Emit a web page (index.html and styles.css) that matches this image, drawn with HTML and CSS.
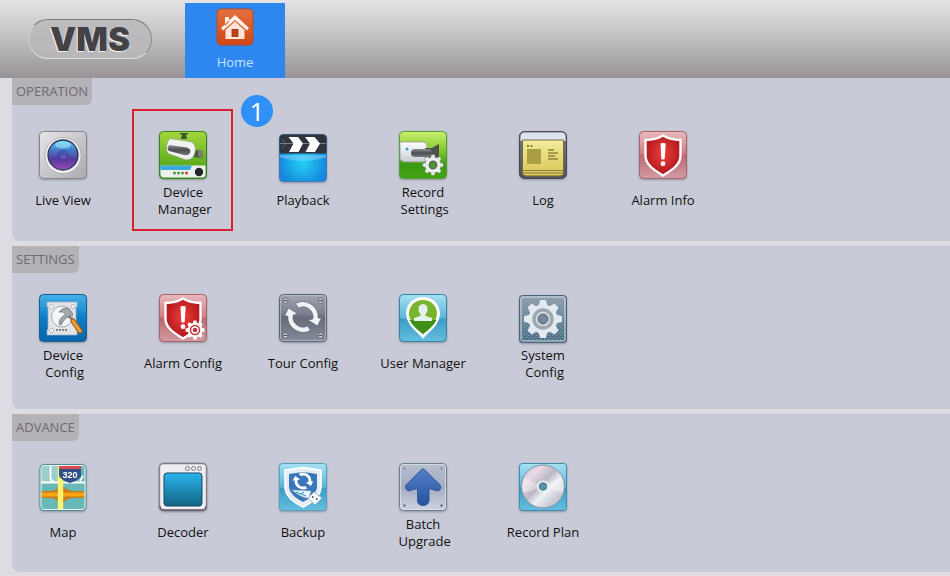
FILE: index.html
```html
<!DOCTYPE html>
<html lang="en">
<head>
  <meta charset="utf-8">
  <title>VMS</title>
  <link rel="stylesheet" href="styles.css">
</head>
<body>
  <!-- shared gradients and shapes -->
  <svg class="defs" aria-hidden="true">
    <defs>
      <linearGradient id="silver" x2="1" y2="1"><stop offset="0" stop-color="#e6e6ea"/><stop offset="1" stop-color="#aaa9ae"/></linearGradient>
      <linearGradient id="white" x2="0" y2="1"><stop offset="0" stop-color="#fff"/><stop offset="1" stop-color="#c9ccd4"/></linearGradient>
      <linearGradient id="lens" x2="0" y2="1"><stop offset="0" stop-color="#59cdf5"/><stop offset=".35" stop-color="#4678c4"/><stop offset=".65" stop-color="#56399d"/><stop offset="1" stop-color="#9a4bb5"/></linearGradient>
      <linearGradient id="green" x2="0" y2="1"><stop offset="0" stop-color="#a4d63a"/><stop offset="1" stop-color="#3f9c14"/></linearGradient>
      <linearGradient id="lime" x2="0" y2="1"><stop offset="0" stop-color="#c9f070"/><stop offset=".45" stop-color="#7cc425"/><stop offset=".7" stop-color="#3b9a10"/><stop offset="1" stop-color="#41a514"/></linearGradient>
      <linearGradient id="dark" x2="0" y2="1"><stop offset="0" stop-color="#8d8f92"/><stop offset=".5" stop-color="#4a4c50"/><stop offset="1" stop-color="#77797d"/></linearGradient>
      <radialGradient id="water" cy=".6"><stop offset="0" stop-color="#22d0f4"/><stop offset="1" stop-color="#1689de"/></radialGradient>
      <linearGradient id="frame" x2="0" y2="1"><stop offset="0" stop-color="#77757f"/><stop offset="1" stop-color="#55505a"/></linearGradient>
      <linearGradient id="paper" x2="0" y2="1"><stop offset="0" stop-color="#f4eb9d"/><stop offset="1" stop-color="#d8c655"/></linearGradient>
      <linearGradient id="pink" x2="0" y2="1"><stop offset="0" stop-color="#e9b9bd"/><stop offset=".48" stop-color="#cf7d84"/><stop offset=".5" stop-color="#b9686f"/><stop offset="1" stop-color="#d39ba2"/></linearGradient>
      <radialGradient id="red" cy=".45"><stop offset="0" stop-color="#ee403c"/><stop offset="1" stop-color="#b5191e"/></radialGradient>
      <linearGradient id="blue" x2="0" y2="1"><stop offset="0" stop-color="#45b2ea"/><stop offset=".5" stop-color="#0e7cc6"/><stop offset="1" stop-color="#0865a9"/></linearGradient>
      <linearGradient id="slate" x2="0" y2="1"><stop offset="0" stop-color="#a3a8b3"/><stop offset=".4" stop-color="#7a808d"/><stop offset=".5" stop-color="#666c7a"/><stop offset="1" stop-color="#858b98"/></linearGradient>
      <linearGradient id="sky" x2="0" y2="1"><stop offset="0" stop-color="#a6e2f3"/><stop offset=".5" stop-color="#5bb5d6"/><stop offset=".53" stop-color="#3b9dc5"/><stop offset="1" stop-color="#65bfdf"/></linearGradient>
      <linearGradient id="steel" x2="0" y2="1"><stop offset="0" stop-color="#91a2b1"/><stop offset=".5" stop-color="#6a8498"/><stop offset="1" stop-color="#4b7088"/></linearGradient>
      <linearGradient id="screen" x2="0" y2="1"><stop offset="0" stop-color="#2bb5ec"/><stop offset="1" stop-color="#126384"/></linearGradient>
      <linearGradient id="plate" x2="0" y2="1"><stop offset="0" stop-color="#b7bfd0"/><stop offset=".5" stop-color="#a2acc2"/><stop offset="1" stop-color="#cdd3e0"/></linearGradient>
      <linearGradient id="arrow" x2="0" y2="1"><stop offset="0" stop-color="#527fc6"/><stop offset="1" stop-color="#26539f"/></linearGradient>
      <linearGradient id="disc" x2="1" y2="1"><stop offset="0" stop-color="#c6c6d0"/><stop offset=".25" stop-color="#ead9e6"/><stop offset=".45" stop-color="#b8b9c4"/><stop offset=".6" stop-color="#eff0f4"/><stop offset=".8" stop-color="#c8c7d2"/><stop offset="1" stop-color="#e4e6eb"/></linearGradient>
      <linearGradient id="orange" x2="0" y2="1"><stop offset="0" stop-color="#e4703e"/><stop offset="1" stop-color="#cf4715"/></linearGradient>
      <pattern id="dots" width="4" height="4" patternUnits="userSpaceOnUse"><rect width="1" height="1" x="1" y="1" fill="#93a9b9"/><rect width="1" height="1" x="3" y="3" fill="#93a9b9"/></pattern>
      <path id="tooth" d="M-4.500-13 L-2.800-19 H2.800 L4.500-13z"/>
      <g id="gear">
        <circle r="14.500"/>
        <use href="#tooth"/><use href="#tooth" transform="rotate(45)"/><use href="#tooth" transform="rotate(90)"/><use href="#tooth" transform="rotate(135)"/>
        <use href="#tooth" transform="rotate(180)"/><use href="#tooth" transform="rotate(225)"/><use href="#tooth" transform="rotate(270)"/><use href="#tooth" transform="rotate(315)"/>
      </g>
      <g id="shield">
        <path d="M24 4.500C30 8 35 9 41.500 9V25C41.500 33 34 38.500 24 44.500C14 38.500 6.500 33 6.500 25V9C13 9 18 8 24 4.500z" fill="url(#red)" stroke="#fff" stroke-width="2.400"/>
        <path d="M21.500 12.500Q24 11.300 26.700 12.500L25.700 28Q24 29 22.300 28z" fill="#fff"/><circle cx="24" cy="32.700" r="2.400" fill="#fff"/>
      </g>
      <g id="screw"><circle r="2.700" fill="#d5d8df" stroke="#525866" stroke-width=".8"/><path d="M-2 0H2" stroke="#454b58" stroke-width="1.200"/></g>
      <g id="cycle">
        <path d="M-7.500-13.500A15.500 15.500 0 0 1 15.200 1H18.500L14.500 9L5 3L9.800 2A10 10 0 0 0-4.500-9z"/>
        <path d="M-7.500-13.500A15.500 15.500 0 0 1 15.200 1H18.500L14.500 9L5 3L9.800 2A10 10 0 0 0-4.500-9z" transform="rotate(180)"/>
      </g>
    </defs>
  </svg>

  <header class="header">
    <div class="logo">VMS</div>
    <button class="tab" type="button">
      <svg class="tab-icon" viewBox="0 0 38 38" aria-hidden="true">
        <rect x="1" y="1" width="36" height="36" rx="4" fill="url(#orange)" stroke="#b94a22"/>
        <path d="M9 18V9H13V14M19 7L5 20L7 22.500L19 12L31 22.500L33 20z" fill="#fff3ec"/>
        <path d="M9.500 22L19 13.500L28.500 22V31H9.500z" fill="#ffe6d9"/>
        <rect x="16" y="21.500" width="6" height="7" fill="#bf4519" stroke="#8a3513" stroke-width=".8"/>
      </svg>
      Home
    </button>
  </header>

  <main class="panels">
    <section class="panel panel-operation">
      <h2 class="panel-title">OPERATION</h2>
      <div class="items">
        <button class="item" type="button">
          <svg class="icon" viewBox="0 0 48 48" aria-hidden="true">
            <rect x=".5" y=".5" width="47" height="47" rx="4" fill="url(#silver)" stroke="#88878d"/>
            <circle cx="24" cy="24.500" r="18" fill="#f1f0f3" stroke="#a8a7ac" stroke-width=".8"/>
            <circle cx="24" cy="24" r="15" fill="url(#lens)" stroke="#293553" stroke-width="1.300"/>
            <ellipse cx="24" cy="14" rx="8" ry="3.500" fill="#a9edff" opacity=".55"/>
            <circle cx="24" cy="24.500" r="6" fill="#3c3b98" opacity=".4"/><ellipse cx="24.500" cy="26" rx="3" ry="2" fill="#7160bd" opacity=".7"/>
          </svg>
          <span class="label">Live View</span>
        </button>
        <button class="item item-marked" type="button">
          <svg class="icon" viewBox="0 0 48 48" aria-hidden="true">
            <rect x=".5" y=".5" width="47" height="47" rx="4" fill="url(#green)" stroke="#35831b"/>
            <path d="M1.500 34.500H46.500V43Q46.500 46.500 43 46.500H5Q1.500 46.500 1.500 43z" fill="#eef0ee"/>
            <path d="M1.500 34.500H33L31 39H1.500z" fill="#39a9dc"/>
            <path d="M20 2H30L27 4L28 8H22L23 4z" fill="#3e5530"/>
            <path d="M35 19L43 20V27L35 26z" fill="#4a5440"/><path d="M39 18L44 20V28L39 25z" fill="#77806f"/>
            <path d="M11 7.500L31 10.500Q36.500 12 36.500 18T32 28L27 29L9 22.500Q7 20 7.500 15T11 7.500z" fill="#f2f2f0" stroke="#8ba07b" stroke-width=".7"/>
            <path d="M10.500 14L28 16.500Q32.500 18 31 22Q29 25 25 24L10 20Q7 17 10.500 14z" fill="url(#dark)"/>
            <circle cx="40" cy="41" r="4.200" fill="#25282a"/>
            <g fill="#579442"><circle cx="15.500" cy="42" r="1.500"/><circle cx="19.500" cy="42" r="1.500"/><circle cx="23.500" cy="42" r="1.500"/></g><circle cx="27.500" cy="42" r="1.500" fill="#d03a39"/>
          </svg>
          <span class="label">Device<br>&nbsp;Manager</span>
          <span class="badge">1</span>
        </button>
        <button class="item" type="button">
          <svg class="icon" viewBox="0 0 48 48" aria-hidden="true">
            <rect x=".5" y="3.500" width="47" height="47" rx="4" fill="url(#water)" stroke="#3b79b8"/>
            <path d="M1 24H47V26Q24 34 1 26z" fill="#8bd8f5" opacity=".5"/>
            <path d="M.5 22.500V7.500Q.5 3.500 4.500 3.500H43.500Q47.500 3.500 47.500 7.500V22.500z" fill="#30343d"/>
            <path d="M1 12.500H47" stroke="#777d88"/>
            <path d="M9.500 6H19L24 12.500L19.500 21H10L14.500 12.500zM26 6H35.500L41 12.500L36 21H26.500L31 12.500z" fill="#fff"/>
            <path d="M3 8L7 12.500L3 17" fill="none" stroke="#868d98" stroke-dasharray="1.500 1"/>
          </svg>
          <span class="label">Playback</span>
        </button>
        <button class="item" type="button">
          <svg class="icon" viewBox="0 0 48 48" aria-hidden="true">
            <rect x=".5" y=".5" width="47" height="47" rx="4" fill="url(#lime)" stroke="#579b35"/>
            <path d="M1 11H24Q28 11 28 15V27Q28 31 24 31H5Q1 30 1 27z" fill="url(#white)" stroke="#8a958a" stroke-width=".7"/>
            <path d="M26 17H33L40 13V31L33 27H26z" fill="#4c534b"/>
            <rect x="12" y="18" width="21" height="8" rx="4" fill="url(#dark)"/>
            <circle cx="8" cy="18" r="1.500" fill="#3b9cdc"/>
            <g transform="translate(34 34) scale(.54)"><use href="#gear" fill="#eef1ee" stroke="#78907a" stroke-width="1"/><circle r="14" fill="#edf0ed"/><circle r="7" fill="#4b9431" stroke="#5b6959" stroke-width="2.500"/></g>
          </svg>
          <span class="label">Record<br>&nbsp;Settings</span>
        </button>
        <button class="item" type="button">
          <svg class="icon" viewBox="0 0 48 48" aria-hidden="true">
            <rect x=".5" y=".5" width="47" height="47" rx="5" fill="url(#frame)" stroke="#4b4955"/>
            <path d="M1.500 10V6Q1.500 1.500 6 1.500H42Q46.500 1.500 46.500 6V10z" fill="#dde3ef"/>
            <path d="M3.500 9H44.500V42Q44.500 45 41 45H7Q3.500 45 3.500 42z" fill="url(#paper)" stroke="#766d3b"/>
            <path d="M4 39.500H44M4 42H44" stroke="#827533" stroke-width=".9"/>
            <rect x="8" y="18" width="14" height="15" fill="#aaa043"/><path d="M8 15H10M11.500 15H13.500" stroke="#655f2b" stroke-width="1.500"/>
            <path d="M29 19H35M29 22H39M29 25H36M29 28H39" stroke="#8e8539" stroke-width="1.300"/>
          </svg>
          <span class="label">Log</span>
        </button>
        <button class="item" type="button">
          <svg class="icon" viewBox="0 0 48 48" aria-hidden="true">
            <rect x=".5" y=".5" width="47" height="47" rx="4" fill="url(#pink)" stroke="#aa6269"/>
            <use href="#shield"/>
          </svg>
          <span class="label">Alarm Info</span>
        </button>
      </div>
    </section>

    <section class="panel">
      <h2 class="panel-title">SETTINGS</h2>
      <div class="items">
        <button class="item" type="button">
          <svg class="icon" viewBox="0 0 48 48" aria-hidden="true">
            <rect x=".5" y=".5" width="47" height="47" rx="4" fill="url(#blue)" stroke="#1c5d92"/>
            <path d="M8 8H38V13H37V36H38V41H8V36H9V13H8z" fill="#e1e3e5" stroke="#9fb1bf" stroke-width=".7"/>
            <g fill="#fff" stroke="#9ba0a5" stroke-width=".7"><circle cx="12.500" cy="12.500" r="2"/><circle cx="34" cy="12.500" r="2"/><circle cx="12.500" cy="36.500" r="2"/></g>
            <circle cx="23" cy="22.500" r="10.500" fill="#f5f6f7" stroke="#a3a8ad"/>
            <path d="M17 36H29" stroke="#7d858b" stroke-width="2" stroke-dasharray="2 1"/>
            <path d="M20 30Q20 25 24 22L27 20Q24 17 20 18Q24 13 29 14L34 20L31 23L27 24Q24 27 22 31z" fill="#a2a7aa" stroke="#666c70" stroke-width=".7"/>
            <path d="M30 22L35 28" stroke="#72777b" stroke-width="2.500"/>
            <path d="M34 27L41 37" stroke="#ab5d13" stroke-width="5" stroke-linecap="round"/><path d="M34 27L41 37" stroke="#f0a03a" stroke-width="3" stroke-linecap="round"/>
          </svg>
          <span class="label">Device<br>&nbsp;Config</span>
        </button>
        <button class="item" type="button">
          <svg class="icon" viewBox="0 0 48 48" aria-hidden="true">
            <rect x=".5" y=".5" width="47" height="47" rx="4" fill="url(#pink)" stroke="#aa6269"/>
            <use href="#shield"/>
            <g transform="translate(36 36) scale(.5)"><use href="#gear" fill="#fff"/><circle r="10.500" fill="#bd343b"/><circle r="6" fill="#bd343b" stroke="#fff" stroke-width="3"/></g>
          </svg>
          <span class="label">Alarm Config</span>
        </button>
        <button class="item" type="button">
          <svg class="icon" viewBox="0 0 48 48" aria-hidden="true">
            <rect x=".5" y=".5" width="47" height="47" rx="4" fill="url(#slate)" stroke="#606675"/>
            <rect x="1.500" y="1.500" width="45" height="45" rx="3" fill="none" stroke="#b7bcc6" stroke-width=".8"/>
            <use href="#screw" x="6.500" y="6.500"/><use href="#screw" x="41.500" y="6.500"/><use href="#screw" x="6.500" y="41.500"/><use href="#screw" x="41.500" y="41.500"/>
            <use href="#cycle" transform="translate(24 23)" fill="#f0f2f6" stroke="#525866" stroke-width=".6"/>
          </svg>
          <span class="label">Tour Config</span>
        </button>
        <button class="item" type="button">
          <svg class="icon" viewBox="0 0 48 48" aria-hidden="true">
            <rect x=".5" y=".5" width="47" height="47" rx="4" fill="url(#sky)" stroke="#3783a4"/>
            <path d="M24 4.500C33 4.500 39.500 11 39.500 20C39.500 29 31 35 24 42.500C17 35 8.500 29 8.500 20C8.500 11 15 4.500 24 4.500z" fill="#79b52c" stroke="#fff" stroke-width="3"/>
            <path d="M10.500 26H37.500Q34 33 24 40Q14 33 10.500 26z" fill="#408f16"/>
            <path d="M20 12Q24 8 28 12Q29.500 17 26.500 20V22L33 24V27H15V24L21.500 22V20Q18.500 17 20 12z" fill="#e5f1ef"/>
          </svg>
          <span class="label">User Manager</span>
        </button>
        <button class="item" type="button">
          <svg class="icon" viewBox="0 0 48 48" aria-hidden="true">
            <rect x=".5" y="1.500" width="47" height="47" rx="3" fill="url(#steel)" stroke="#486477"/>
            <rect x="2" y="3" width="44" height="44" rx="2" fill="url(#dots)" stroke="#d3dde4"/>
            <g transform="translate(24 25)"><use href="#gear" fill="#e3e9f1"/><circle r="9" fill="#d9dfe6" stroke="#9ea6af" stroke-width="3.500"/><circle r="5" fill="#78889a" stroke="#56677a"/></g>
          </svg>
          <span class="label">System<br>&nbsp;Config</span>
        </button>
      </div>
    </section>

    <section class="panel panel-advance">
      <h2 class="panel-title">ADVANCE</h2>
      <div class="items">
        <button class="item" type="button">
          <svg class="icon" viewBox="0 0 48 48" aria-hidden="true">
            <rect x="1" y="2" width="46" height="46" rx="4" fill="#68b8b8"/>
            <path d="M2 19V5Q2 3 5 3H19V19z" fill="#9acfce"/>
            <path d="M2 19.500H46M11.500 3V15Q12 18 15 19M41 18L44 13" stroke="#fff" stroke-width="1.800" fill="none"/>
            <path d="M2 28H11Q17 28 19 24H25Q28 28 35 28H46V35H35Q28 35 25 39H19Q17 35 11 35H2z" fill="#c57c18"/>
            <path d="M2 29.500H46V33.500H2z" fill="#f7a415"/>
            <path d="M21.500 3V47" stroke="#fff171" stroke-width="5.500"/>
            <path d="M20 2.500H42V6H20z" fill="#d64b50"/><path d="M20 6H42V13Q39 18 31 20Q23 18 20 13z" fill="#344e88"/>
            <text x="31" y="14.500" text-anchor="middle" class="route">320</text>
            <rect x="1" y="1.500" width="46" height="46" rx="4" fill="none" stroke="#588b91"/><rect x="2" y="2.500" width="44" height="44" rx="3" fill="none" stroke="#e5f4f2"/>
          </svg>
          <span class="label">Map</span>
        </button>
        <button class="item" type="button">
          <svg class="icon" viewBox="0 0 48 48" aria-hidden="true">
            <rect x=".5" y=".5" width="47" height="47" rx="4" fill="#eeedf1" stroke="#817d86" stroke-width="1.300"/>
            <path d="M1 43Q1 47 5 47H43Q47 47 47 43" fill="none" stroke="#655e69" stroke-width="1.500"/>
            <g fill="none" stroke="#777982"><circle cx="28.500" cy="5.500" r="2"/><circle cx="34.500" cy="5.500" r="2"/><circle cx="40.500" cy="5.500" r="2"/></g>
            <rect x="5" y="10" width="38" height="33" rx="3" fill="url(#screen)" stroke="#174963"/>
          </svg>
          <span class="label">Decoder</span>
        </button>
        <button class="item" type="button">
          <svg class="icon" viewBox="0 0 48 48" aria-hidden="true">
            <rect x=".5" y=".5" width="47" height="47" rx="3" fill="url(#sky)" stroke="#559fbd"/>
            <path d="M24 4.500Q33 6 42 7V25Q41 36 24 44Q7 36 6 25V7Q15 6 24 4.500z" fill="#e7edf4" stroke="#fff" stroke-width="1.500"/>
            <path d="M24 9Q32 10 38 11V25Q36 33 24 39Q12 33 10 25V11Q16 10 24 9z" fill="#3977bb"/>
            <use href="#cycle" transform="translate(24 18) scale(.55)" fill="#fff"/>
            <path d="M13 27L32 28L30 35Q24 36 13 27z" fill="#ebf5fa" stroke="#95aec2" stroke-width=".6"/><path d="M17 29L27 33M22 31L25 29" stroke="#2a8fc4"/>
            <path d="M29 35L35 29L43 35L36 42z" fill="#f6f8fa" stroke="#9cabb8" stroke-width=".8"/>
            <rect x="33" y="33" width="1.500" height="2" fill="#56646f"/><rect x="37" y="35" width="1.500" height="2" fill="#56646f"/>
          </svg>
          <span class="label">Backup</span>
        </button>
        <button class="item" type="button">
          <svg class="icon" viewBox="0 0 48 48" aria-hidden="true">
            <rect x=".5" y=".5" width="47" height="47" rx="4" fill="url(#plate)" stroke="#737c8d"/>
            <rect x="1.500" y="1.500" width="45" height="45" rx="3" fill="none" stroke="#dce1ea" stroke-width=".8"/>
            <g fill="#6d7585"><circle cx="5.500" cy="5.500" r="1"/><circle cx="42.500" cy="5.500" r="1"/><circle cx="5.500" cy="42.500" r="1.300"/><circle cx="42.500" cy="42.500" r="1.300"/></g>
            <path d="M22.500 6.500Q24 5 25.500 6.500L41 22Q43.500 26 39 28L30 25.500V38Q29 42.500 24 42.500T18.500 38V25.500L9 28Q5 26 7 22z" fill="url(#arrow)" stroke="#274d8e" stroke-width=".8"/>
          </svg>
          <span class="label">Batch<br>&nbsp;Upgrade</span>
        </button>
        <button class="item" type="button">
          <svg class="icon" viewBox="0 0 48 48" aria-hidden="true">
            <rect x=".5" y=".5" width="47" height="47" rx="3" fill="url(#sky)" stroke="#3b8dad"/>
            <circle cx="24" cy="23.500" r="21.500" fill="url(#disc)" stroke="#818c9b" stroke-width=".9"/>
            <path d="M24 23.500L5 15Q2.500 22 4 30zM24 23.500L43 15Q45.500 22 44 30z" fill="#fff" opacity=".35"/>
            <circle cx="24" cy="23.500" r="6" fill="#edf3f7"/><circle cx="24" cy="23.500" r="3.800" fill="#5993a8" stroke="#4a788e"/>
          </svg>
          <span class="label">Record Plan</span>
        </button>
      </div>
    </section>
  </main>
</body>
</html>
```

FILE: styles.css
```css
* {
  box-sizing: border-box;
}

body {
  margin: 0;
  background-color: #dddce3;
  font-family: "Open Sans", "Noto Sans", sans-serif;
  color: #111;
}

button {
  border: none;
  background: none;
  color: inherit;
  font-family: inherit;
  cursor: pointer;
}

.defs {
  position: absolute;
  width: 0;
  height: 0;
}

.header {
  display: flex;
  align-items: flex-end;
  gap: 33px;
  height: 78px;
  padding-left: 28px;
  background: linear-gradient(#e5e3e6, #c4c2c5 45%, #979396);
}

.logo {
  display: flex;
  align-items: center;
  justify-content: center;
  width: 124px;
  height: 40px;
  margin-bottom: 19px;
  border: 1px solid;
  border-color: #79777a #8d8b8e #dddbdd #d0ced1;
  border-radius: 20px;
  background: linear-gradient(#bebcbf, #b8b6b9);
  color: #444246;
  font-family: Inter, "Liberation Sans", sans-serif;
  font-size: 33px;
  font-weight: 900;
  text-shadow: -1px 1px 0 #f4f3f5;
}

.tab {
  display: flex;
  flex-direction: column;
  align-items: center;
  gap: 7px;
  width: 100px;
  height: 75px;
  padding: 5px 0 0;
  background-color: #2e87ef;
  color: #c5e1ff;
  font-size: 13px;
  line-height: 18px;
}

.tab-icon {
  width: 38px;
  height: 38px;
}

.panels {
  display: flex;
  flex-direction: column;
  gap: 5px;
  padding: 0 0 4px 12px;
}

.panel {
  padding-bottom: 15px;
  border-radius: 0 0 0 8px;
  background-color: #c8cbd7;
}

.panel-title {
  width: fit-content;
  margin: 0;
  padding: 0 4px;
  border-radius: 0 0 6px 0;
  background-color: #b4b2b7;
  color: #6b6b71;
  font-size: 13px;
  font-weight: normal;
  line-height: 27px;
}

.items {
  display: flex;
  gap: 20px;
  padding-left: 1px;
}

.item {
  position: relative;
  display: flex;
  flex-direction: column;
  align-items: center;
  gap: 5px;
  width: 100px;
  padding: 21px 0 13px;
}

.panel-operation {
  padding-bottom: 10px;
}

.panel-operation .items {
  padding-top: 5px;
}

.panel-advance {
  padding-bottom: 9px;
}

.panel-advance .items {
  padding-top: 1px;
}

.icon {
  width: 48px;
  height: 48px;
  overflow: visible;
  filter: drop-shadow(0 1px 1px rgba(60, 60, 80, 0.4));
}

.label {
  display: flex;
  align-items: center;
  min-height: 32px;
  font-size: 13px;
  line-height: 17px;
  white-space: nowrap;
}

.item-marked::after {
  content: "";
  position: absolute;
  inset: -1px 0 0 -1px;
  border: 2px solid #d9202b;
}

/* step number on the corner of the marked item */
.badge {
  position: absolute;
  top: -15px;
  right: -40px;
  width: 32px;
  height: 32px;
  border-radius: 50%;
  background-color: #2f91f8;
  color: #fff;
  font-size: 26px;
  font-weight: 500;
  line-height: 32px;
  text-align: center;
}

.route {
  fill: #fff;
  font-family: "Liberation Sans", sans-serif;
  font-size: 9px;
  font-weight: bold;
}
```
